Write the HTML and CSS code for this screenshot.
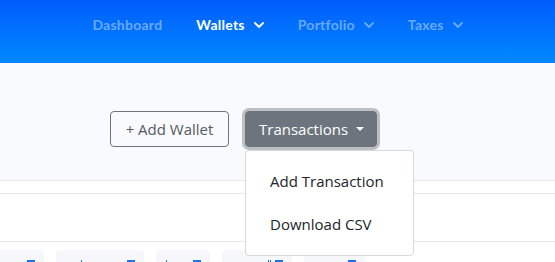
FILE: index.html
```html
<!DOCTYPE html>
<html>
<head>
<meta charset="utf-8">
<link rel="stylesheet" href="styles.css">
</head>
<body>
<header class="topbar">
  <nav class="nav">
    <a class="nav-item dim">Dashboard</a>
    <a class="nav-item active">Wallets <svg class="chev" viewBox="0 0 10 6" width="10" height="6"><path d="M1 1l4 4 4-4" fill="none" stroke="currentColor" stroke-width="1.8" stroke-linecap="round" stroke-linejoin="round"/></svg></a>
    <a class="nav-item dim">Portfolio <svg class="chev" viewBox="0 0 10 6" width="10" height="6"><path d="M1 1l4 4 4-4" fill="none" stroke="currentColor" stroke-width="1.8" stroke-linecap="round" stroke-linejoin="round"/></svg></a>
    <a class="nav-item dim">Taxes <svg class="chev" viewBox="0 0 10 6" width="10" height="6"><path d="M1 1l4 4 4-4" fill="none" stroke="currentColor" stroke-width="1.8" stroke-linecap="round" stroke-linejoin="round"/></svg></a>
  </nav>
</header>
<section class="toolbar">
  <button class="btn btn-outline">+ Add Wallet</button>
  <div class="dropdown">
    <button class="btn btn-dark">Transactions <span class="caret"></span></button>
    <div class="menu">
      <div class="menu-item">Add Transaction</div>
      <div class="menu-item">Download CSV</div>
    </div>
  </div>
</section>
<div class="strip"></div>
<div class="panel"></div>
<div class="cards">
  <div class="card c1"><span class="ico"></span></div>
  <div class="card c2"><span class="tick"></span><span class="ico"></span></div>
  <div class="card c3"><span class="tick"></span><span class="ico"></span></div>
  <div class="card c4"><span class="tick"></span><span class="tick t2"></span><span class="ico"></span></div>
  <div class="card c5"><span class="ico"></span></div>
</div>
</body>
</html>
```
FILE: styles.css
```css
* { box-sizing: border-box; }
html, body { margin: 0; padding: 0; }
body {
  width: 555px;
  height: 262px;
  overflow: hidden;
  background: #fff;
  font-family: "Open Sans", "Lato", sans-serif;
}
.topbar {
  height: 63px;
  background: linear-gradient(180deg, #005dfd 0%, #0088ff 100%);
}
.nav {
  display: flex;
  justify-content: center;
  align-items: center;
  gap: 34px;
  padding-top: 14px;
  height: 20px;
  box-sizing: content-box;
  font-family: "Lato", sans-serif;
}
.nav-item {
  display: flex;
  align-items: center;
  gap: 9px;
  font-size: 14px;
  font-weight: 700;
  letter-spacing: 0.25px;
  color: #fff;
}
.nav-item.dim { color: rgba(255,255,255,0.42); }
.chev { margin-top: 1px; }
.toolbar {
  height: 118px;
  background: #f9fafd;
  border-bottom: 1px solid #e5e7eb;
  display: flex;
  align-items: flex-start;
  gap: 16px;
  padding: 48px 0 0 110px;
}
.btn {
  height: 36px;
  border-radius: 4px;
  font-family: inherit;
  font-size: 15px;
  padding: 0 12px;
  display: flex;
  align-items: center;
  cursor: pointer;
}
.btn-outline {
  background: transparent;
  border: 1px solid #6c757d;
  color: #555b61;
  width: 119px;
  justify-content: center;
}
.dropdown { position: relative; }
.btn-dark {
  background: #6c757d;
  border: 1px solid #6c757d;
  color: #fff;
  box-shadow: 0 0 0 3px #bcc0c4;
  width: 132px;
  padding: 0 13px;
  gap: 8px;
}
.caret {
  width: 0; height: 0;
  border-left: 4px solid transparent;
  border-right: 4px solid transparent;
  border-top: 4px solid #fff;
}
.menu {
  position: absolute;
  top: 39px;
  left: 0;
  width: 169px;
  height: 106px;
  background: #fff;
  border: 1px solid #d6d9dd;
  border-radius: 4px;
  padding-top: 20px;
  z-index: 2;
}
.menu-item {
  height: 43px;
  padding-left: 24px;
  font-size: 15px;
  color: #212529;
  line-height: 20px;
}
.strip {
  height: 13px;
  border-bottom: 1px solid #e5e7eb;
}
.panel {
  height: 48px;
  border-bottom: 1px solid #e5e7eb;
}
.cards {
  display: flex;
  gap: 12px;
  margin-top: 8px;
}
.card {
  position: relative;
  height: 20px;
  background: #f5f7fa;
  border-radius: 4px 4px 0 0;
}
.c1 { width: 44px; border-top-left-radius: 0; }
.c2 { width: 88px; }
.c3 { width: 54px; }
.c4 { width: 70px; }
.c5 { width: 61px; }
.ico {
  position: absolute;
  right: 9px;
  top: 10px;
  width: 8px;
  height: 2px;
  background: #1a73e8;
}
.tick {
  position: absolute;
  top: 10px;
  left: 25px;
  width: 1px;
  height: 2px;
  background: #1a73e8;
}
.c3 .tick { left: 10px; }
.c4 .tick { left: 46px; }
.c4 .t2 { left: 48px; }
```
